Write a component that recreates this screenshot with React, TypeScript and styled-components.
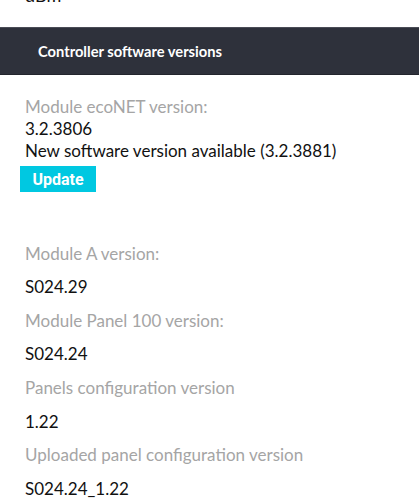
import styled, { createGlobalStyle } from "styled-components";

const GlobalStyle = createGlobalStyle`
  body {
    margin: 0;
    background: #ffffff;
    font-family: Lato, "Open Sans", sans-serif;
  }
`;

const versions = [
  { label: "Module A version:", value: "S024.29" },
  { label: "Module Panel 100 version:", value: "S024.24" },
  { label: "Panels configuration version", value: "1.22" },
  { label: "Uploaded panel configuration version", value: "S024.24_1.22" },
];

const App = () => {
  return (
    <Page>
      <GlobalStyle />
      <PrevValue>dBm</PrevValue>
      <SectionHeader>Controller software versions</SectionHeader>
      <EcoNetBlock>
        <Label $tight>Module ecoNET version:</Label>
        <Value $tight>3.2.3806</Value>
        <Value $tight>New software version available (3.2.3881)</Value>
        <UpdateButton>Update</UpdateButton>
      </EcoNetBlock>
      <VersionList>
        {versions.map((v) => (
          <Row key={v.label}>
            <Label>{v.label}</Label>
            <Value>{v.value}</Value>
          </Row>
        ))}
      </VersionList>
    </Page>
  );
};

export default App;

const Page = styled.div`
  width: 419px;
  height: 500px;
  overflow: hidden;
  display: flex;
  flex-direction: column;
`;

const PrevValue = styled.div`
  margin-top: -15px;
  padding-left: 25px;
  font-size: 18px;
  line-height: 20px;
  color: #111;
`;

const SectionHeader = styled.div`
  margin-top: 22px;
  height: 46px;
  flex-shrink: 0;
  display: flex;
  align-items: center;
  padding-left: 38px;
  background: #2e313b;
  border-top: 1px solid #4a4c56;
  border-bottom: 1px solid #23252d;
  color: #ffffff;
  font-weight: 700;
  font-size: 14.7px;
`;

const EcoNetBlock = styled.div`
  padding: 21px 0 0 25px;
  display: flex;
  flex-direction: column;
  align-items: flex-start;
`;

const Label = styled.div<{ $tight?: boolean }>`
  color: #a5a5a5;
  font-size: 17px;
  line-height: ${(p) => (p.$tight ? "22px" : "33.6px")};
`;

const Value = styled.div<{ $tight?: boolean }>`
  color: #111111;
  font-size: 17px;
  line-height: ${(p) => (p.$tight ? "22px" : "33.6px")};
`;

const UpdateButton = styled.button`
  margin-left: -5px;
  margin-top: 4px;
  width: 76px;
  height: 26px;
  border: none;
  background: #00c8e1;
  color: #ffffff;
  font-family: Roboto, sans-serif;
  font-weight: 700;
  font-size: 16px;
  padding: 0;
  cursor: pointer;
`;

const VersionList = styled.div`
  padding: 44.6px 0 0 25px;
  display: flex;
  flex-direction: column;
`;

const Row = styled.div`
  display: flex;
  flex-direction: column;
`;
